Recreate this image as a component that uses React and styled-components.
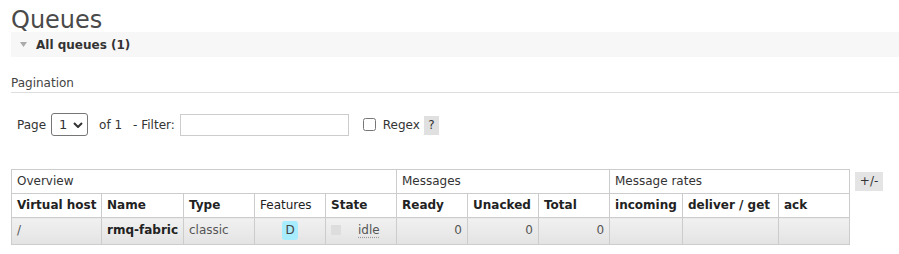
import React from "react";
import styled, { createGlobalStyle } from "styled-components";

const Global = createGlobalStyle`
  html, body { margin: 0; padding: 0; background: #fff; }
  body {
    font-family: "DejaVu Sans", Verdana, sans-serif;
    font-size: 12px;
    color: #444;
  }
`;

const Page = styled.div`
  padding: 0 0 0 11px;
`;

const Title = styled.h1`
  margin: 8px 0 0;
  font-size: 24px;
  line-height: 24px;
  font-weight: normal;
  color: #4a4a4a;
`;

const SectionBar = styled.div`
  height: 25px;
  background: #f7f7f7;
  display: flex;
  align-items: center;
  padding-left: 9px;
`;

const SectionTitle = styled.h2`
  margin: 0 0 0 9px;
  font-size: 12px;
  font-weight: bold;
  color: #333;
`;

const SubHeading = styled.h3`
  margin: 19px 0 0;
  font-size: 12px;
  font-weight: normal;
  line-height: 15px;
  padding-bottom: 1px;
  border-bottom: 1px solid #ddd;
  color: #444;
`;

const PagerRow = styled.div`
  margin-top: 20px;
  height: 23px;
  display: flex;
  align-items: center;
  padding-left: 6px;
  color: #333;
`;

const Text = styled.span`
  margin-left: ${(p) => p.$ml || 0}px;
  white-space: pre;
`;

const SelectWrap = styled.span`
  position: relative;
  display: inline-block;
  margin-left: 5px;
  width: 37px;
  height: 23px;
  box-sizing: border-box;
`;

const Select = styled.select`
  appearance: none;
  width: 100%;
  height: 100%;
  box-sizing: border-box;
  border: 1px solid #767676;
  border-radius: 3px;
  background: #fff;
  font: inherit;
  font-size: 13px;
  color: #333;
  padding: 0 0 0 7px;
  margin: 0;
`;

const Chevron = styled.svg`
  position: absolute;
  right: 5px;
  top: 9px;
  pointer-events: none;
`;

const FilterInput = styled.input`
  margin: 0 0 0 5px;
  width: 169px;
  height: 22px;
  box-sizing: border-box;
  border: 1px solid #ccc;
  padding: 2px 4px;
  font: inherit;
`;

const Check = styled.input`
  margin: 0 0 0 14px;
  width: 13px;
  height: 13px;
`;

const Help = styled.span`
  margin-left: 4px;
  width: 15px;
  height: 19px;
  line-height: 19px;
  text-align: center;
  background: #e0e0e0;
  color: #333;
  margin-top: 2px;
`;

const TableRow = styled.div`
  margin-top: 33px;
  display: flex;
  align-items: flex-start;
  gap: 5px;
`;

const Table = styled.table`
  border-collapse: collapse;
  table-layout: fixed;
  width: 839px;
`;

const Col = styled.col`
  width: ${(p) => p.$w}px;
`;

const GroupTh = styled.th`
  border: 1px solid #ccc;
  padding: 4px 5px;
  line-height: 15px;
  text-align: left;
  font-weight: normal;
  color: #333;
  white-space: nowrap;
`;

const Th = styled.th`
  border: 1px solid #ccc;
  padding: 4px 5px;
  line-height: 15px;
  text-align: left;
  font-weight: ${(p) => (p.$plain ? "normal" : "bold")};
  color: #222;
  white-space: nowrap;
`;

const Td = styled.td`
  border: 1px solid #ccc;
  padding: 2px 5px 4px;
  height: 20px;
  line-height: 15px;
  text-align: ${(p) => p.$align || "left"};
  font-weight: ${(p) => (p.$bold ? "bold" : "normal")};
  color: ${(p) => (p.$bold ? "#222" : "#555")};
  background: linear-gradient(#f1f1f1, #e3e3e3);
  white-space: nowrap;
  vertical-align: middle;
`;

const Badge = styled.span`
  display: inline-block;
  padding: 2px 3.5px;
  line-height: 15px;
  border-radius: 3px;
  background: #a8ecff;
  color: #444;
  vertical-align: middle;
`;

const StateBox = styled.span`
  display: inline-block;
  width: 10px;
  height: 10px;
  background: #ddd;
  margin-right: 17px;
  vertical-align: -1px;
`;

const Abbr = styled.abbr`
  text-decoration: underline dotted #999;
  text-underline-offset: 3px;
  color: #555;
`;

const Toggle = styled.span`
  margin-top: 3px;
  width: 28px;
  height: 19px;
  line-height: 19px;
  text-align: center;
  background: #e4e4e4;
  color: #333;
`;

export default function App() {
  const widths = [90, 82, 71, 71, 71, 71, 71, 71, 73, 96, 71];
  return (
    <>
      <Global />
      <Page>
        <Title>Queues</Title>
        <SectionBar>
          <svg width="7" height="5" viewBox="0 0 7 5">
            <polygon points="0,0 7,0 3.5,5" fill="#aaa" />
          </svg>
          <SectionTitle>All queues (1)</SectionTitle>
        </SectionBar>
        <SubHeading>Pagination</SubHeading>
        <PagerRow>
          <Text>Page</Text>
          <SelectWrap>
            <Select defaultValue="1">
              <option value="1">1</option>
            </Select>
            <Chevron width="10" height="6" viewBox="0 0 10 6">
              <polyline points="1,1 5,5 9,1" fill="none" stroke="#333" strokeWidth="2" />
            </Chevron>
          </SelectWrap>
          <Text $ml={11}>of 1</Text>
          <Text $ml={11}>- Filter:</Text>
          <FilterInput type="text" />
          <Check type="checkbox" />
          <Text $ml={7}>Regex</Text>
          <Help>?</Help>
        </PagerRow>
        <TableRow>
          <Table>
            <colgroup>
              {widths.map((w, i) => (
                <Col key={i} $w={w} />
              ))}
            </colgroup>
            <thead>
              <tr>
                <GroupTh colSpan={5}>Overview</GroupTh>
                <GroupTh colSpan={3}>Messages</GroupTh>
                <GroupTh colSpan={3}>Message rates</GroupTh>
              </tr>
              <tr>
                <Th>Virtual host</Th>
                <Th>Name</Th>
                <Th>Type</Th>
                <Th $plain>Features</Th>
                <Th>State</Th>
                <Th>Ready</Th>
                <Th>Unacked</Th>
                <Th>Total</Th>
                <Th>incoming</Th>
                <Th>deliver / get</Th>
                <Th>ack</Th>
              </tr>
            </thead>
            <tbody>
              <tr>
                <Td>/</Td>
                <Td $bold>rmq-fabric</Td>
                <Td>classic</Td>
                <Td $align="center">
                  <Badge>D</Badge>
                </Td>
                <Td>
                  <StateBox />
                  <Abbr>idle</Abbr>
                </Td>
                <Td $align="right">0</Td>
                <Td $align="right">0</Td>
                <Td $align="right">0</Td>
                <Td></Td>
                <Td></Td>
                <Td></Td>
              </tr>
            </tbody>
          </Table>
          <Toggle>+/-</Toggle>
        </TableRow>
      </Page>
    </>
  );
}
